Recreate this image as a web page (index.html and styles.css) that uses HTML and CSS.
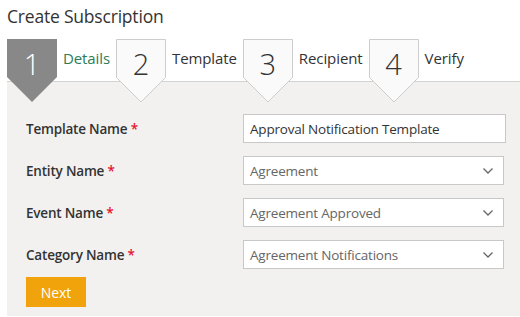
FILE: index.html
```html
<!DOCTYPE html>
<html lang="en">
<head>
    <meta charset="UTF-8">
    <meta name="viewport" content="width=device-width, initial-scale=1.0">
    <title>Create Subscription</title>
    <link rel="stylesheet" href="styles.css">
</head>
<body>

    <div class="page">
        <h1 class="title">Create Subscription</h1>

        <div class="steps">
            <div class="step active">
                <div class="step-box">
                    <svg width="50" height="64" viewBox="0 0 50 64">
                        <polygon points="0,0 50,0 50,38 25,63 0,38" fill="#888888"/>
                    </svg>
                    <span class="step-num">1</span>
                </div>
                <span class="step-label">Details</span>
            </div>
            <div class="step">
                <div class="step-box">
                    <svg width="50" height="64" viewBox="0 0 50 64">
                        <polygon points="0.5,0.5 49.5,0.5 49.5,38.5 25,63 0.5,38.5" fill="#fafafa" stroke="#cdcdcd"/>
                    </svg>
                    <span class="step-num">2</span>
                </div>
                <span class="step-label">Template</span>
            </div>
            <div class="step">
                <div class="step-box">
                    <svg width="50" height="64" viewBox="0 0 50 64">
                        <polygon points="0.5,0.5 49.5,0.5 49.5,38.5 25,63 0.5,38.5" fill="#fafafa" stroke="#cdcdcd"/>
                    </svg>
                    <span class="step-num">3</span>
                </div>
                <span class="step-label">Recipient</span>
            </div>
            <div class="step">
                <div class="step-box">
                    <svg width="50" height="64" viewBox="0 0 50 64">
                        <polygon points="0.5,0.5 49.5,0.5 49.5,38.5 25,63 0.5,38.5" fill="#fafafa" stroke="#cdcdcd"/>
                    </svg>
                    <span class="step-num">4</span>
                </div>
                <span class="step-label">Verify</span>
            </div>
        </div>

        <div class="panel">
            <div class="form-row">
                <label class="form-label">Template Name <span class="req">*</span></label>
                <input class="form-input" type="text" value="Approval Notification Template">
            </div>
            <div class="form-row">
                <label class="form-label">Entity Name <span class="req">*</span></label>
                <div class="form-select">
                    <span>Agreement</span>
                    <svg width="10" height="6" viewBox="0 0 10 6"><polyline points="0.5,0.5 5,5 9.5,0.5" fill="none" stroke="#666" stroke-width="1.3"/></svg>
                </div>
            </div>
            <div class="form-row">
                <label class="form-label">Event Name <span class="req">*</span></label>
                <div class="form-select">
                    <span>Agreement Approved</span>
                    <svg width="10" height="6" viewBox="0 0 10 6"><polyline points="0.5,0.5 5,5 9.5,0.5" fill="none" stroke="#666" stroke-width="1.3"/></svg>
                </div>
            </div>
            <div class="form-row">
                <label class="form-label">Category Name <span class="req">*</span></label>
                <div class="form-select">
                    <span>Agreement Notifications</span>
                    <svg width="10" height="6" viewBox="0 0 10 6"><polyline points="0.5,0.5 5,5 9.5,0.5" fill="none" stroke="#666" stroke-width="1.3"/></svg>
                </div>
            </div>
            <button class="btn-next" type="button">Next</button>
        </div>
    </div>

</body>
</html>
```

FILE: styles.css
```css
body {
    font-family: "Open Sans", "Noto Sans", sans-serif;
    background-color: #fff;
    color: #333;
    margin: 0;
    padding: 0;
}

.page {
    padding-left: 7px;
}

.title {
    font-size: 17.5px;
    font-weight: normal;
    margin: 0;
    height: 39px;
    line-height: 32px;
    letter-spacing: -0.2px;
}

.steps {
    display: flex;
    height: 42px;
    border-bottom: 1px solid #d3d3d3;
}

.step {
    display: flex;
    align-items: center;
    height: 42px;
}

.step-box {
    position: relative;
    z-index: 1;
    align-self: flex-start;
    width: 50px;
    height: 64px;
}

.step-box svg {
    display: block;
}

.step-num {
    position: absolute;
    top: 5px;
    left: 0;
    width: 50px;
    text-align: center;
    font-size: 29px;
    font-weight: 300;
    color: #333;
}

.active .step-num {
    color: #fff;
}

.step-label {
    font-size: 15px;
    margin: 0 6px;
    padding-bottom: 4px;
    letter-spacing: -0.1px;
}

.active .step-label {
    color: #2b7d55;
}

.panel {
    background-color: #f2f1f0;
    padding: 32px 0 9px 19px;
}

.form-row {
    display: flex;
    align-items: center;
    margin-bottom: 13px;
}

.form-row:nth-child(4) {
    margin-bottom: 8px;
}

.form-label {
    width: 217px;
    font-size: 13.5px;
    font-weight: 600;
    color: #333;
    letter-spacing: -0.2px;
}

.req {
    color: #e8112d;
}

.form-input {
    width: 263px;
    height: 29px;
    box-sizing: border-box;
    border: 1px solid #c8c8c8;
    padding: 0 6px;
    font-family: inherit;
    font-size: 13.5px;
    color: #333;
    letter-spacing: -0.2px;
    margin: 0;
}

.form-select {
    width: 261px;
    height: 29px;
    box-sizing: border-box;
    border: 1px solid #c8c8c8;
    background: #fff;
    padding: 0 10px 0 6px;
    display: flex;
    align-items: center;
    justify-content: space-between;
    font-size: 13.5px;
    color: #666;
    letter-spacing: -0.2px;
}

.btn-next {
    width: 60px;
    height: 30px;
    background-color: #f0a30a;
    color: white;
    font-family: inherit;
    font-size: 14px;
    border: none;
    cursor: pointer;
    padding: 0;
}
```
